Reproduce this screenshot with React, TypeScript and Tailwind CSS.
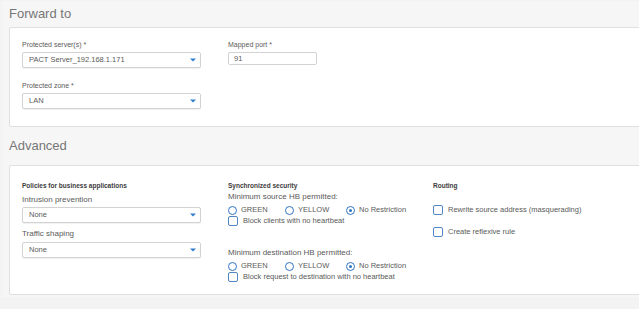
import React from "react";

function Select({ value }: { value: string }) {
  return (
    <div className="flex h-[16px] w-[179px] items-center justify-between rounded-[2px] border border-[#d2d2d2] bg-white pl-[6px] pr-[4px] shadow-[0_1px_1px_rgba(0,0,0,0.06)]">
      <span className="text-[7.5px] text-[#5a5a5a]">{value}</span>
      <svg width="6" height="4" viewBox="0 0 6 4">
        <path d="M0 0.5 L6 0.5 L3 3.5 Z" fill="#2f7fd0" />
      </svg>
    </div>
  );
}

function Radio({ label, checked = false, width }: { label: string; checked?: boolean; width: string }) {
  return (
    <div className={`flex items-center gap-[4px] ${width}`}>
      <span className="flex h-[9px] w-[9px] items-center justify-center rounded-full border-[1.5px] border-[#2f74c0] bg-white">
        {checked && <span className="h-[3px] w-[3px] rounded-full bg-[#2f74c0]" />}
      </span>
      <span className="text-[7.5px] text-[#5a5a5a]">{label}</span>
    </div>
  );
}

function Check({ label }: { label: string }) {
  return (
    <div className="flex items-center gap-[5px]">
      <span className="h-[10px] w-[10px] rounded-[2px] border border-[#4f86c6] bg-white" />
      <span className="text-[7.5px] text-[#5a5a5a]">{label}</span>
    </div>
  );
}

export default function App() {
  return (
    <div
      className="h-[309px] w-[639px] overflow-hidden bg-[#f3f3f3]"
      style={{ fontFamily: '"Liberation Sans", Arial, sans-serif' }}
    >
      <div className="ml-[2px] mt-[1px] h-[296px] w-[700px] bg-[#f6f6f6] pl-[7px]">
        <div className="flex h-[26px] items-center text-[13px] text-[#777]">Forward to</div>

        <div className="h-[100px] rounded-[2px] border border-[#e0e0e0] bg-white pl-[12px] pt-[12px]">
          <div className="flex gap-[27px]">
            <div className="w-[179px]">
              <div className="mb-[3px] h-[9px] text-[7px] leading-[9px] text-[#5a5a5a]">Protected server(s) *</div>
              <Select value="PACT Server_192.168.1.171" />
              <div className="mb-[3px] mt-[13px] h-[9px] text-[7px] leading-[9px] text-[#5a5a5a]">Protected zone *</div>
              <Select value="LAN" />
            </div>
            <div>
              <div className="mb-[3px] h-[9px] text-[7px] leading-[9px] text-[#5a5a5a]">Mapped port *</div>
              <div className="flex h-[13px] w-[89px] items-center rounded-[2px] border border-[#d2d2d2] bg-white pl-[5px] text-[7.5px] text-[#5a5a5a]">
                91
              </div>
            </div>
          </div>
        </div>

        <div className="flex h-[38px] items-center text-[13px] text-[#777]">Advanced</div>

        <div className="h-[130px] rounded-[2px] border border-[#e0e0e0] bg-white pl-[12px] pt-[15px]">
          <div className="flex">
            <div className="w-[206px]">
              <div className="h-[9px] text-[6.5px] font-semibold leading-[9px] text-[#3c3c3c]">Policies for business applications</div>
              <div className="mt-[4px] h-[11px] text-[8px] leading-[11px] text-[#5a5a5a]">Intrusion prevention</div>
              <div className="mt-[2px]">
                <Select value="None" />
              </div>
              <div className="mt-[5px] h-[11px] text-[8px] leading-[11px] text-[#5a5a5a]">Traffic shaping</div>
              <div className="mt-[3px]">
                <Select value="None" />
              </div>
            </div>

            <div className="w-[205px]">
              <div className="h-[9px] text-[6.5px] font-semibold leading-[9px] text-[#3c3c3c]">Synchronized security</div>
              <div className="mt-[2px] h-[10px] text-[8px] leading-[10px] text-[#5a5a5a]">Minimum source HB permitted:</div>
              <div className="mt-[3px] flex h-[10px] items-center">
                <Radio label="GREEN" width="w-[57px]" />
                <Radio label="YELLOW" width="w-[61px]" />
                <Radio label="No Restriction" checked width="w-auto" />
              </div>
              <div className="mt-[1px] flex h-[10px] items-center">
                <Check label="Block clients with no heartbeat" />
              </div>
              <div className="mt-[22px] h-[10px] text-[8px] leading-[10px] text-[#5a5a5a]">Minimum destination HB permitted:</div>
              <div className="mt-[3px] flex h-[10px] items-center">
                <Radio label="GREEN" width="w-[57px]" />
                <Radio label="YELLOW" width="w-[61px]" />
                <Radio label="No Restriction" checked width="w-auto" />
              </div>
              <div className="mt-[1px] flex h-[10px] items-center">
                <Check label="Block request to destination with no heartbeat" />
              </div>
            </div>

            <div>
              <div className="h-[9px] text-[6.5px] font-semibold leading-[9px] text-[#3c3c3c]">Routing</div>
              <div className="mt-[15px] flex h-[10px] items-center">
                <Check label="Rewrite source address (masquerading)" />
              </div>
              <div className="mt-[12px] flex h-[10px] items-center">
                <Check label="Create reflexive rule" />
              </div>
            </div>
          </div>
        </div>
      </div>
    </div>
  );
}
